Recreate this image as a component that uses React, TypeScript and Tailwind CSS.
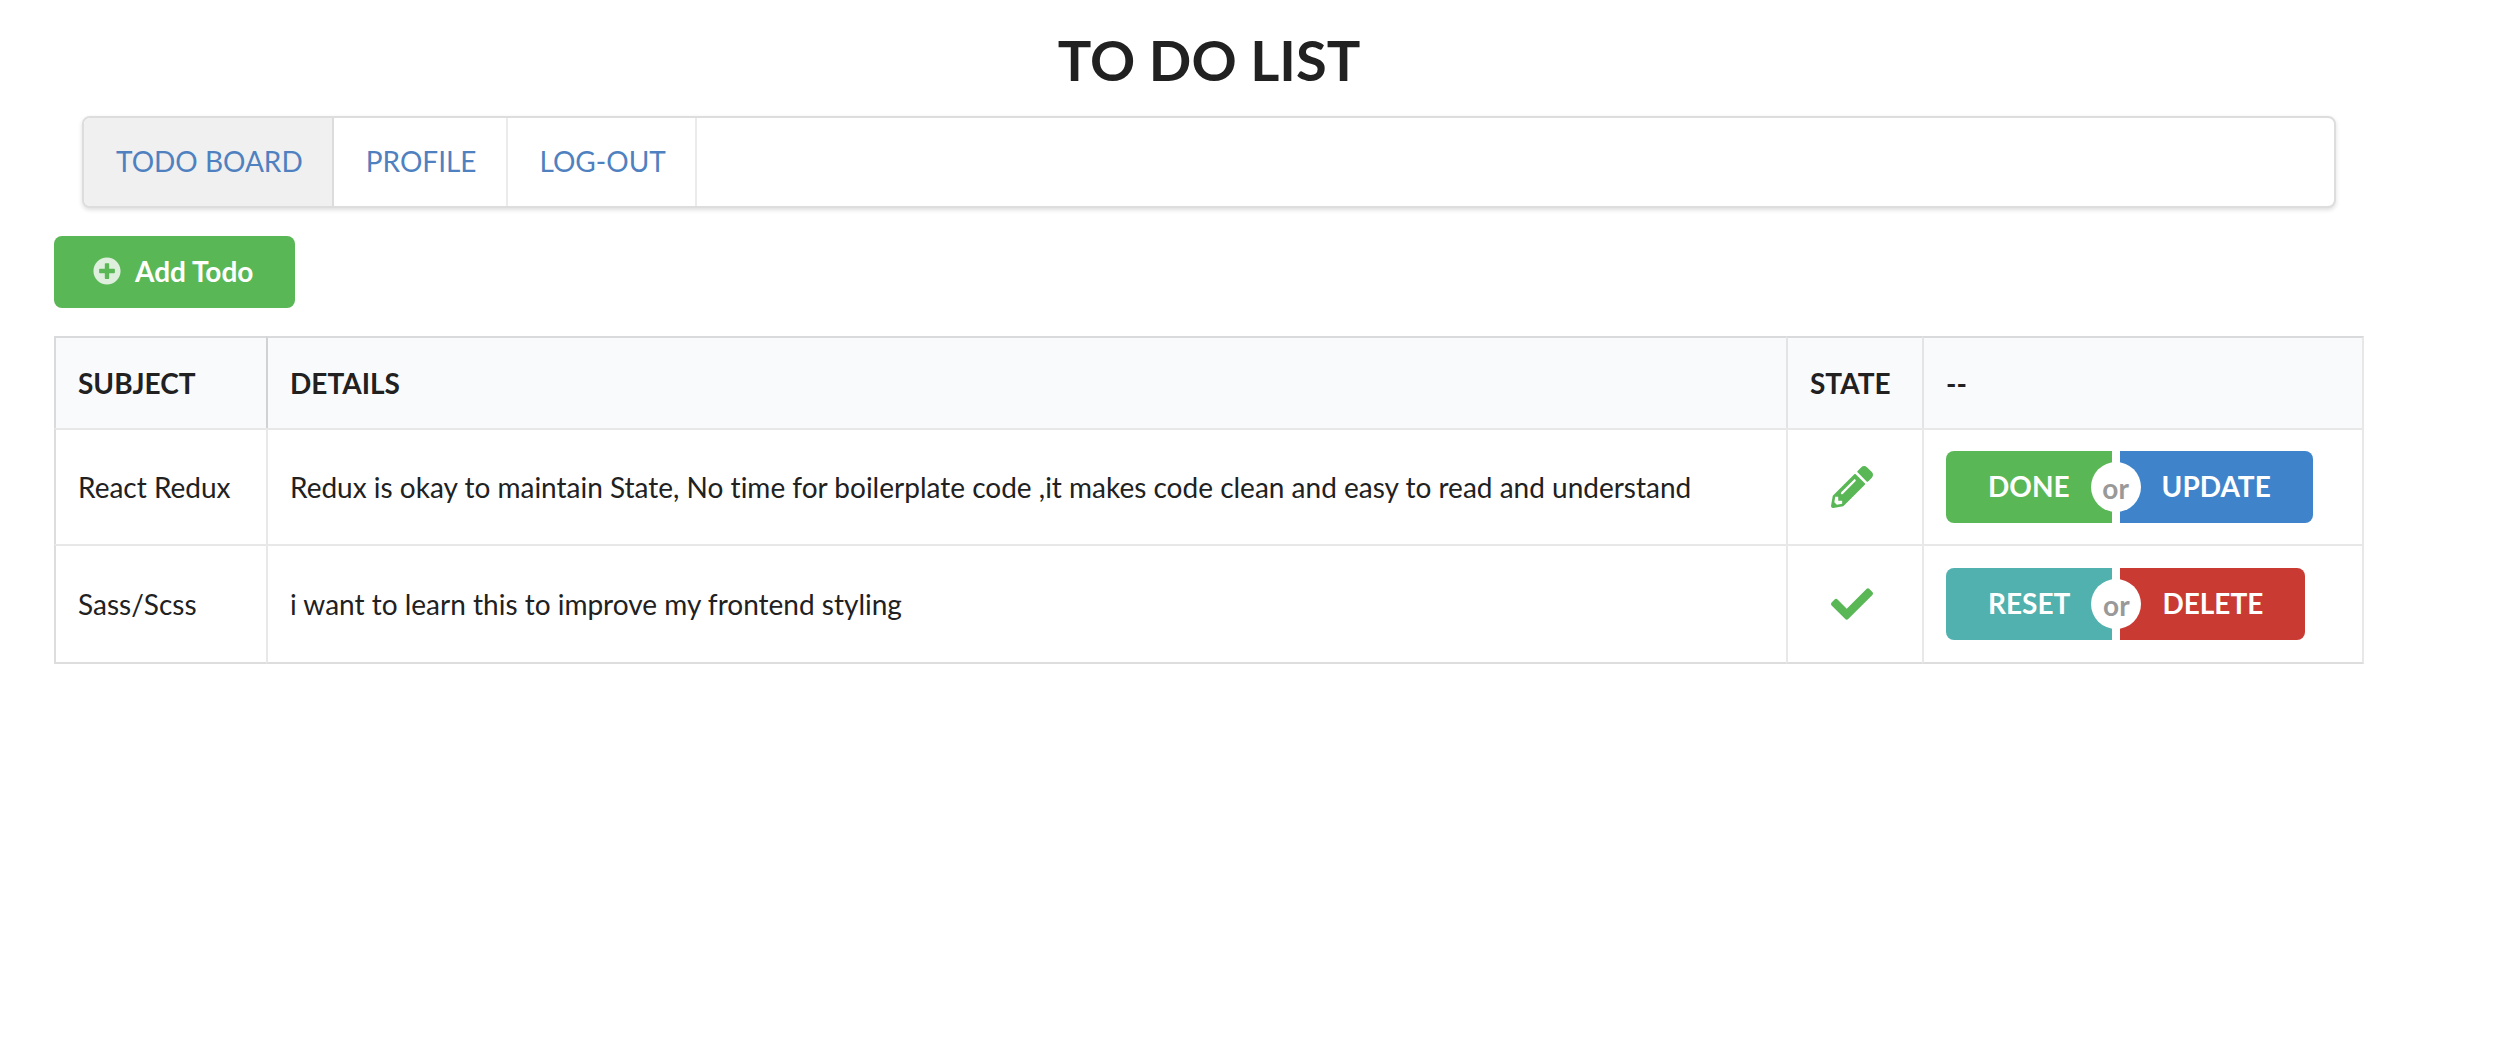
import type { ReactNode } from "react";
import { FaCheck, FaPencilAlt, FaPlusCircle } from "react-icons/fa";

type Action = { label: string; tone: string };

type Todo = {
  subject: string;
  details: string;
  done: boolean;
  actions: [Action, Action];
};

const navItems = ["TODO BOARD", "PROFILE", "LOG-OUT"];

const todos: Todo[] = [
  {
    subject: "React Redux",
    details:
      "Redux is okay to maintain State, No time for boilerplate code ,it makes code clean and easy to read and understand",
    done: false,
    actions: [
      { label: "DONE", tone: "bg-[#5ab756]" },
      { label: "UPDATE", tone: "bg-[#3f84ca]" },
    ],
  },
  {
    subject: "Sass/Scss",
    details: "i want to learn this to improve my frontend styling",
    done: true,
    actions: [
      { label: "RESET", tone: "bg-[#50b1ae]" },
      { label: "DELETE", tone: "bg-[#c93a33]" },
    ],
  },
];

function NavBar() {
  return (
    <nav className="mx-7 flex h-[92px] overflow-hidden rounded-lg border-2 border-[#dddddd] bg-white shadow-[0_2px_4px_rgba(34,36,38,0.15)]">
      {navItems.map((item, index) => (
        <a
          key={item}
          href="#"
          aria-current={index === 0 ? "page" : undefined}
          className={
            index === 0
              ? "flex items-center border-r-2 border-[#dcdcdc] bg-[#f0f0f0] pr-[29px] pb-0.5 pl-8 text-[#4f81c0]"
              : "flex items-center border-r-2 border-[#ebebeb] pr-[29px] pb-0.5 pl-8 text-[#4f81c0]"
          }
        >
          {item}
        </a>
      ))}
    </nav>
  );
}

function ActionPair({ actions }: { actions: [Action, Action] }) {
  const [first, second] = actions;
  return (
    <div className="flex font-bold text-white">
      <button type="button" className={`${first.tone} rounded-l-lg px-[42px] pt-[21px] pb-[23px]`}>
        {first.label}
      </button>
      <div className="relative w-2">
        <span className="absolute top-1/2 left-1/2 flex size-[50px] -translate-1/2 items-center justify-center rounded-full bg-white pt-0.5 text-[#999999]">
          or
        </span>
      </div>
      <button type="button" className={`${second.tone} rounded-r-lg px-[42px] pt-[21px] pb-[23px]`}>
        {second.label}
      </button>
    </div>
  );
}

function HeadCell({ children }: { children: ReactNode }) {
  return (
    <th
      scope="col"
      className="border-t-2 border-l-2 border-t-[#d8dadc] border-l-[#e2e4e6] px-[22px] py-[31px] text-left font-bold first:border-l-[#d8dadc] last:border-r-2 last:border-r-[#e8e8e8] nth-2:border-l-[#d0d2d4]"
    >
      {children}
    </th>
  );
}

function Cell({ children }: { children: ReactNode }) {
  return (
    <td className="border-t-2 border-l-2 border-[#e8e8e8] px-[22px] first:border-l-[#dddddd] last:border-r-2 group-last:border-b-2 group-last:border-b-[#dddddd]">
      {children}
    </td>
  );
}

function TodoTable() {
  return (
    <table className="w-full table-fixed border-separate border-spacing-0">
      <colgroup>
        <col className="w-[212px]" />
        <col />
        <col className="w-[136px]" />
        <col className="w-[442px]" />
      </colgroup>
      <thead className="bg-[#f9fafc]">
        <tr>
          <HeadCell>SUBJECT</HeadCell>
          <HeadCell>DETAILS</HeadCell>
          <HeadCell>STATE</HeadCell>
          <HeadCell>--</HeadCell>
        </tr>
      </thead>
      <tbody>
        {todos.map((todo) => (
          <tr key={todo.subject} className="group h-[116px] last:h-[120px]">
            <Cell>{todo.subject}</Cell>
            <Cell>{todo.details}</Cell>
            <Cell>
              <div className="mr-1.5 flex justify-center text-[42px] text-[#5ab756]">
                {todo.done ? (
                  <FaCheck role="img" aria-label="Done" />
                ) : (
                  <FaPencilAlt role="img" aria-label="In progress" />
                )}
              </div>
            </Cell>
            <Cell>
              <ActionPair actions={todo.actions} />
            </Cell>
          </tr>
        ))}
      </tbody>
    </table>
  );
}

export default function App() {
  return (
    <main className="mr-[140px] ml-[54px] font-['Lato',sans-serif] text-[28px] leading-7 text-[#212121] [font-variant-ligatures:none]">
      <h1 className="pt-6 pb-5 text-center text-[56px] leading-[72px] font-bold">TO DO LIST</h1>
      <NavBar />
      <button
        type="button"
        className="my-7 flex items-center rounded-lg bg-[#5ab756] pt-[21px] pr-[42px] pb-[23px] pl-9 font-bold text-white"
      >
        <span className="mr-3 flex w-[33px] justify-center opacity-80">
          <FaPlusCircle aria-hidden="true" />
        </span>
        Add Todo
      </button>
      <TodoTable />
    </main>
  );
}
